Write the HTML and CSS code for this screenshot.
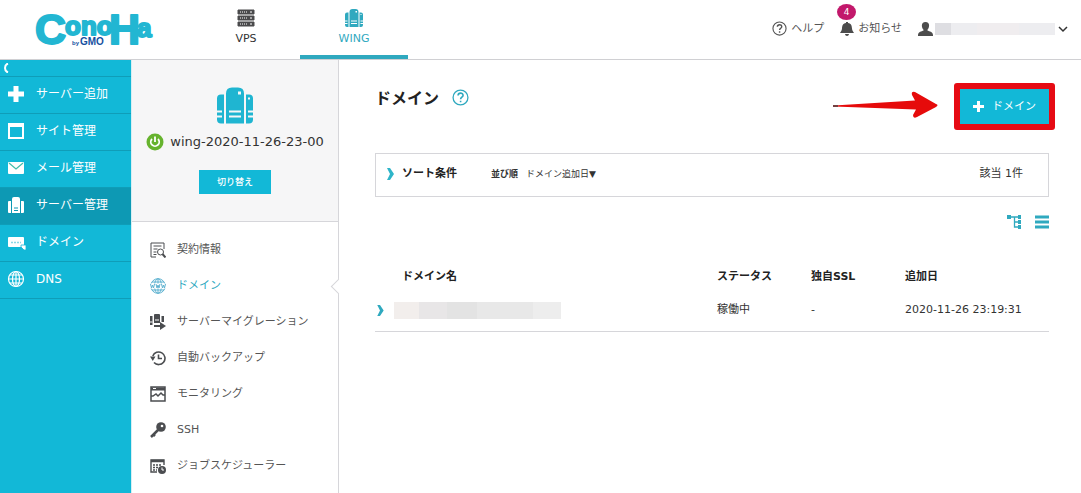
FILE: index.html
```html
<!DOCTYPE html>
<html lang="ja">
<head>
<meta charset="utf-8">
<title>ドメイン - ConoHa WING</title>
<link rel="stylesheet" href="styles.css">
</head>
<body>
<svg class="defs" aria-hidden="true">
  <symbol id="tower" viewBox="0 0 36 36">
    <path d="M0 11q0-4 4-4h3v29H4q-4 0-4-4v-2h5v-2H0v-3h5v-2H0zM9 6q0-6 6-6h6q6 0 6 6v30H9zM29 7h3q4 0 4 4v12h-5v2h5v3h-5v2h5v2q0 4-4 4h-3zM31 10v2h2v-2zM12 23v2h12v-2zM12 28v2h12v-2zM21 4v3h3V4z" fill="currentColor" fill-rule="evenodd"/>
  </symbol>
  <symbol id="help" viewBox="0 0 16 16">
    <circle cx="8" cy="8" r="7" fill="none" stroke="currentColor" stroke-width="1.2"/>
    <path d="M5.7 6.2c.1-3 4.7-3 4.7-.2 0 1.700-2.300 1.800-2.300 3.600M8.100 11v1.500" fill="none" stroke="currentColor" stroke-width="1.5"/>
  </symbol>
  <symbol id="chev" viewBox="0 0 8 12">
    <path d="M1 0h3l4 6-4 6H1l3-6z" fill="currentColor"/>
  </symbol>
</svg>

<header class="header">
  <a class="logo" href="#" aria-label="ConoHa by GMO">
    <svg width="124" height="56" viewBox="0 0 124 56">
      <g class="logo-name">
        <text class="logo-cap" x="3" y="42">C</text>
        <text class="logo-low" x="33" y="33">ono</text>
        <text class="logo-cap" x="77" y="42">H</text>
        <text class="logo-low" x="105" y="35">a</text>
      </g>
      <text class="logo-by" x="40" y="43">by</text>
      <text class="logo-gmo" x="48" y="43">GMO</text>
    </svg>
  </a>
  <nav class="tabs">
    <a class="tab" href="#">
      <svg width="18" height="18" viewBox="0 0 18 18"><path d="M1 1h16v4H1zM1 7h16v4H1zM1 13h16v4H1z" fill="#4a4a4c" stroke="#4a4a4c" stroke-linejoin="round"/><path d="M3 3h7M3 9h7M3 15h7" stroke="#fff" stroke-dasharray="1 1"/><path d="M13 3h2M13 9h2M13 15h2" stroke="#fff"/></svg>
      VPS
    </a>
    <a class="tab tab-on" href="#"><svg width="18" height="18"><use href="#tower"/></svg>WING</a>
  </nav>
  <div class="tools">
    <a class="tool" href="#"><svg width="15" height="15"><use href="#help"/></svg>ヘルプ</a>
    <a class="tool" href="#">
      <span class="bell">
        <svg width="14" height="14" viewBox="0 0 14 14"><path d="M6 0h2v1c3.500.5 3.800 3 4 5.500.2 2 .8 2.500 2 4.500H0c1.200-2 1.800-2.500 2-4.500C2.200 4 2.500 1.500 6 1zM5 12h4c-.2 2.500-3.800 2.500-4 0z" fill="#4c4c4c"/></svg>
        <span class="badge">4</span>
      </span>
      お知らせ
    </a>
    <button class="user" type="button" aria-label="アカウント">
      <svg width="15" height="14" viewBox="0 0 15 14"><path d="M7.500 0c5 0 4 6 1.800 8 0 1.500 5.700 1 5.700 5v1H0v-1c0-4 5.700-3.500 5.700-5C3.500 6 2.500 0 7.500 0z" fill="#4c4c4c"/></svg>
      <span class="mask mask-user"></span>
      <svg width="12" height="8" viewBox="0 0 12 8"><path d="M2 2l4 4 4-4" fill="none" stroke="#333" stroke-width="1.500"/></svg>
    </button>
  </div>
</header>

<div class="layout">
  <nav class="side">
    <button class="collapse" type="button" aria-label="閉じる"><svg width="6" height="10" viewBox="0 0 6 10"><path d="M5 .5C1 2 1 8 5 9.500" fill="none" stroke="#fff" stroke-width="2"/></svg></button>
    <a class="side-link" href="#"><svg width="18" height="18" viewBox="0 0 18 18"><path d="M9 1v16M1 9h16" stroke="#fff" stroke-width="5"/></svg>サーバー追加</a>
    <a class="side-link" href="#"><svg width="18" height="18" viewBox="0 0 18 18"><path d="M1 1h16v16H1zM3 5v10h12V5z" fill="#fff" fill-rule="evenodd"/></svg>サイト管理</a>
    <a class="side-link" href="#"><svg width="18" height="18" viewBox="0 0 18 18"><rect x="1" y="3" width="16" height="12" rx="1" fill="#fff"/><path d="M2 4l7 6 7-6" fill="none" stroke="#43bda9" stroke-width="1.200"/></svg>メール管理</a>
    <a class="side-link side-on" href="#"><svg width="18" height="18" viewBox="0 0 18 18"><path d="M1 6q0-1 1-1h2v12H2q-1 0-1-1zM5 3q0-2 2-2h4q2 0 2 2v14H5zM14 5h2q1 0 1 1v10q0 1-1 1h-2z" fill="#fff"/><path d="M7 12h4M7 14.500h4" stroke="#0d99b4"/></svg>サーバー管理</a>
    <a class="side-link" href="#"><svg width="18" height="18" viewBox="0 0 18 18"><rect x="1" y="4" width="16" height="10" rx="1" fill="#fff"/><path d="M4 9.500h10" stroke="#8bd8e6" stroke-width="1.500" stroke-dasharray="2 1"/><path d="M14 12h5v5h-2l-3-3z" fill="#fff" stroke="#12b8d7" stroke-width=".8"/></svg>ドメイン</a>
    <a class="side-link" href="#"><svg width="18" height="18" viewBox="0 0 18 18" fill="none" stroke="#fff" stroke-width="1.200"><circle cx="9" cy="9" r="7.500"/><ellipse cx="9" cy="9" rx="3.500" ry="7.500"/><path d="M9 1v16M1 9h16M2.500 5h13M2.500 13h13"/></svg>DNS</a>
  </nav>

  <aside class="panel">
    <div class="server">
      <svg class="server-icon" width="36" height="37"><use href="#tower"/></svg>
      <div class="server-name">
        <svg width="18" height="18" viewBox="0 0 18 18"><circle cx="9" cy="9" r="8.500" fill="#66b32e"/><path d="M6 6a4.200 4.200 0 1 0 6 0M9 3.500V9" fill="none" stroke="#fff" stroke-width="1.800"/></svg>
        wing-2020-11-26-23-00
      </div>
      <button class="switch" type="button">切り替え</button>
    </div>
    <nav class="menu">
      <a class="item" href="#"><svg width="16" height="16" viewBox="0 0 16 16"><path d="M6 15H1V1h13v6M3.500 4h8M3.500 7h4M3.500 10h3M3.500 12.500h3"/><circle cx="10.500" cy="10" r="3"/><path d="M12.500 12l3 3.500" stroke-width="2"/></svg>契約情報</a>
      <a class="item item-on" href="#"><svg width="16" height="16" viewBox="0 0 16 16" stroke-width="1"><circle cx="8" cy="8" r="7.300"/><ellipse cx="8" cy="8" rx="3.500" ry="7.300"/><path d="M8 1v14M2 4h12M2 12h12"/><path d="M0 8h16" stroke="#fff" stroke-width="5"/><path d="M.5 6l1 4 1-3 1 3 1-4M6 6l1 4 1-3 1 3 1-4M11.500 6l1 4 1-3 1 3 1-4"/></svg>ドメイン<span class="notch"></span></a>
      <a class="item" href="#"><svg width="16" height="16" viewBox="0 0 16 16"><path d="M0 2h2.500v9H0zM4 1q0-1 1-1h4q1 0 1 1v8H4zM11.500 2H14v6h-2.500zM4 11h6V8l6 4-6 4v-3H4z" fill="#4b4d50" stroke="none"/><path d="M5 6h4M0 8h2.500" stroke="#fff"/></svg>サーバーマイグレーション</a>
      <a class="item" href="#"><svg width="16" height="16" viewBox="0 0 16 16" stroke-width="1.600"><path d="M2.800 6A6.300 6.300 0 1 1 4 12.500M8.500 4.500v4H12"/><path d="M0 6.500h5.500L2.800 11z" fill="#4b4d50" stroke="none"/></svg>自動バックアップ</a>
      <a class="item" href="#"><svg width="16" height="16" viewBox="0 0 16 16" stroke-width="1.500"><path d="M1 1h14v14H1z"/><path d="M1 3h14" stroke-width="3"/><path d="M3 2.500h3" stroke="#fff" stroke-width="1"/><path d="M1 10h2l3-2 2 2 3-3 2 2h2"/></svg>モニタリング</a>
      <a class="item" href="#"><svg width="16" height="16" viewBox="0 0 16 16"><circle cx="11" cy="5" r="4.800" fill="#4b4d50" stroke="none"/><circle cx="12" cy="4" r="1.300" fill="#fff" stroke="none"/><path d="M8 8l-7 7M3 12l2 2" stroke-width="2.500"/></svg>SSH</a>
      <a class="item" href="#"><svg width="16" height="16" viewBox="0 0 16 16"><path d="M7 14H1V2h13v5" stroke-width="1.400"/><path d="M1 3h13" stroke-width="2.500"/><path d="M3 7h9M3 9.500h5M3 12h4" stroke-dasharray="2 1" stroke-width="1.500"/><circle cx="12" cy="12" r="4" fill="#4b4d50" stroke="none"/><path d="M12 9.500V12h2" stroke="#fff" stroke-width="1"/></svg>ジョブスケジューラー</a>
    </nav>
  </aside>

  <main class="main">
    <div class="title-row">
      <h1>ドメイン</h1>
      <button class="plain teal" type="button" aria-label="ヘルプ"><svg width="17" height="17"><use href="#help"/></svg></button>
      <div class="add-wrap">
        <svg class="arrow" width="106" height="28" viewBox="0 0 106 28"><path d="M1 14.500L82 9.500 79 4q-1-4 3-3l21 12q3 1 0 3L84 26q-4 2-4-2l3-5.500L1 15.500z" fill="#e60b0b"/><path d="M0 15h5" stroke="#754040" stroke-width="2"/></svg>
        <button class="add" type="button"><svg width="11" height="11" viewBox="0 0 11 11"><path d="M5.500 0v11M0 5.500h11" stroke="#fff" stroke-width="3"/></svg>ドメイン</button>
        <span class="mark"></span>
      </div>
    </div>

    <section class="sort">
      <button class="sort-toggle" type="button"><svg width="8" height="12"><use href="#chev"/></svg>ソート条件</button>
      <strong class="sort-label">並び順</strong>
      <button class="sort-by" type="button">ドメイン追加日▼</button>
      <span class="count">該当 1件</span>
    </section>

    <div class="views">
      <button class="plain teal" type="button" aria-label="ツリー表示"><svg width="16" height="14" viewBox="0 0 16 14"><path d="M1 0h4v4H1zM12 0h3v4h-3zM12 5h3v4h-3zM12 10h3v4h-3z" fill="currentColor"/><path d="M5 2h7M8.500 2v10H12M8.500 7H12" fill="none" stroke="currentColor" stroke-width="1.300"/></svg></button>
      <button class="plain teal" type="button" aria-label="リスト表示"><svg width="14" height="14" viewBox="0 0 14 14"><path d="M0 2h14M0 7h14M0 12h14" stroke="currentColor" stroke-width="3"/></svg></button>
    </div>

    <table class="domains">
      <thead>
        <tr><th class="c-open"></th><th class="c-name">ドメイン名</th><th class="c-mid">ステータス</th><th class="c-mid">独自SSL</th><th class="c-date">追加日</th></tr>
      </thead>
      <tbody>
        <tr><td><button class="plain teal" type="button" aria-label="詳細を開く"><svg width="10" height="11"><use href="#chev"/></svg></button></td><td><span class="mask mask-name"></span></td><td>稼働中</td><td>-</td><td>2020-11-26 23:19:31</td></tr>
      </tbody>
    </table>
  </main>
</div>
</body>
</html>
```
FILE: styles.css
```css
* { box-sizing: border-box; }
body {
  margin: 0;
  min-height: 100vh;
  display: flex;
  flex-direction: column;
  background: #fff;
  color: #333;
  font: 11px/16px "DejaVu Sans", "Noto Sans CJK JP", sans-serif;
}
a { color: inherit; text-decoration: none; }
button {
  font: inherit;
  color: inherit;
  border: 0;
  padding: 0;
  background: none;
  cursor: pointer;
}
svg { display: block; flex: none; }
.defs { position: absolute; width: 0; height: 0; }
.plain { display: flex; }
.teal { color: #2fa9bf; }

.header {
  display: flex;
  height: 60px;
  border-bottom: 1px solid #d0d0d3;
}
.logo { width: 192px; padding: 2px 0 0 32px; }
.logo svg { font-family: "Liberation Sans", Arial, sans-serif; font-weight: bold; }
.logo-name { fill: #22b6d2; stroke: #22b6d2; stroke-linejoin: round; }
.logo-cap { font-size: 43px; stroke-width: 2; }
.logo-low { font-size: 26px; stroke-width: 2; }
.logo-by, .logo-gmo { fill: #16509f; }
.logo-by { font-size: 6px; }
.logo-gmo { font-size: 10px; }

.tabs { display: flex; }
.tab {
  width: 108px;
  display: flex;
  flex-direction: column;
  align-items: center;
  gap: 4px;
  padding-top: 9px;
  border-bottom: 4px solid transparent;
}
.tab-on { color: #2fa9bf; border-color: #2fa9bf; }

.tools {
  display: flex;
  align-items: center;
  gap: 16px;
  height: 57px;
  margin-left: auto;
  padding-right: 12px;
  color: #555;
}
.tool, .user { display: flex; align-items: center; gap: 4px; }
.user { gap: 2px; }
.bell { position: relative; }
.badge {
  position: absolute;
  left: -3px;
  top: -18px;
  width: 19px;
  height: 16px;
  border-radius: 50%;
  background: #c2186b;
  color: #fff;
  font-size: 9px;
  text-align: center;
}
.mask { display: block; }
.mask-user {
  width: 120px;
  height: 12px;
  background: linear-gradient(90deg, #dedee2 13%, #ededf0 13% 35%, #f0edef 35% 70%, #ededf0 70%);
}

.layout { flex: 1; display: flex; }
.side { flex: none; width: 131px; background: #12b8d7; color: #fff; }
.collapse {
  display: flex;
  align-items: center;
  width: 100%;
  height: 17px;
  padding-left: 3px;
  border-bottom: 1px solid #0f9db8;
}
.side-link {
  display: flex;
  align-items: center;
  height: 37px;
  padding: 0 7px 2px;
  gap: 11px;
  font-size: 12px;
  border-bottom: 1px solid #0f9db8;
}
.side-link svg { overflow: visible; }
.side-on { background: #0d99b4; }

.panel {
  flex: none;
  width: 208px;
  border-right: 1px solid #d6d6da;
  border-left: 1px solid #d6eef3;
}
.server {
  display: flex;
  flex-direction: column;
  align-items: center;
  padding: 27px 0;
  background: #f6f6f7;
  border-bottom: 1px solid #d6d6da;
}
.server-icon { color: #1fb5d1; }
.server-name {
  display: flex;
  align-items: center;
  gap: 6px;
  margin: 9px 0 19px;
  font-size: 13px;
  line-height: 18px;
}
.switch {
  width: 72px;
  height: 24px;
  background: #12b8d7;
  color: #fff;
  font-size: 9px;
  font-weight: 500;
}
.menu { padding-top: 10px; }
.item {
  position: relative;
  display: flex;
  align-items: center;
  gap: 11px;
  height: 36px;
  padding-left: 18px;
  color: #555;
}
.item svg { fill: none; stroke: #4b4d50; }
.item-on { color: #2fa9bf; }
.item-on svg { stroke: #5eb2d0; }
.notch {
  position: absolute;
  right: -6px;
  top: 13px;
  width: 11px;
  height: 11px;
  background: #fff;
  border: solid #d6d6da;
  border-width: 0 0 1px 1px;
  transform: rotate(45deg);
}

.main { flex: 1; padding: 29px 32px 20px 36px; }
.title-row { display: flex; align-items: flex-start; }
h1 { margin: 0 13px 0 0; font-size: 16px; line-height: 20px; color: #222; }
.add-wrap { position: relative; margin-left: auto; }
.add {
  display: flex;
  align-items: center;
  justify-content: center;
  gap: 8px;
  width: 89px;
  height: 35px;
  background: #12b8d7;
  color: #fff;
}
.mark {
  position: absolute;
  inset: -6px;
  border: 6px solid #e60b14;
  border-radius: 3px;
  pointer-events: none;
}
.arrow { position: absolute; right: 110px; top: 2px; }

.sort {
  display: flex;
  align-items: center;
  height: 44px;
  margin-top: 29px;
  padding: 0 25px 2px 10px;
  border: 1px solid #d6d6da;
}
.sort-toggle { display: flex; align-items: center; gap: 8px; font-weight: bold; color: #222; }
.sort-toggle svg { color: #2fb5c9; }
.sort-label { margin: 0 8px 0 34px; font-size: 9px; }
.sort-by { font-size: 9px; }
.count { margin-left: auto; }

.views { display: flex; justify-content: flex-end; gap: 13px; padding: 18px 0 35px; }

.domains { width: 100%; border-collapse: collapse; table-layout: fixed; }
.domains th, .domains td { padding: 0; text-align: left; }
.domains th { height: 26px; color: #222; }
.domains td { height: 41px; }
.domains tbody tr { border-bottom: 1px solid #d6d6da; }
.c-open { width: 19px; }
.domains .c-name { padding-left: 8px; }
.c-mid { width: 94px; }
.c-date { width: 144px; }
.mask-name {
  width: 167px;
  height: 17px;
  background: linear-gradient(90deg, #f2eeec 15%, #e8e6e7 15% 32%, #e3e3e3 32% 50%, #e8e8e8 50% 83%, #ededed 83%);
}
```
